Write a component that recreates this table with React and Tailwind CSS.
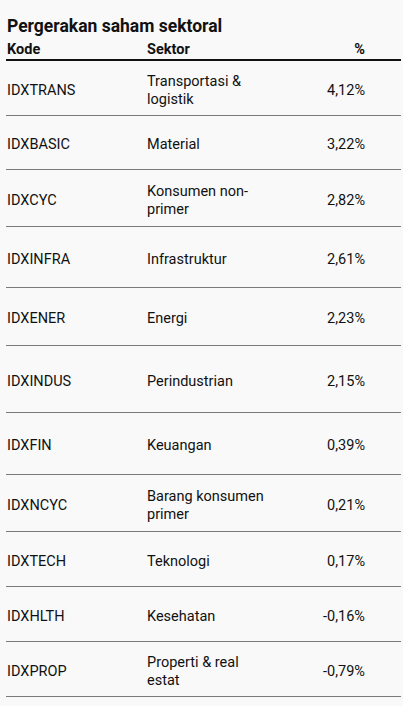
const rows = [
  { code: 'IDXTRANS', sector: 'Transportasi & logistik', pct: '4,12%', h: 'h-[55px]' },
  { code: 'IDXBASIC', sector: 'Material', pct: '3,22%', h: 'h-[54px]' },
  { code: 'IDXCYC', sector: 'Konsumen non-primer', pct: '2,82%', h: 'h-[57px]' },
  { code: 'IDXINFRA', sector: 'Infrastruktur', pct: '2,61%', h: 'h-[61px]' },
  { code: 'IDXENER', sector: 'Energi', pct: '2,23%', h: 'h-[58px]' },
  { code: 'IDXINDUS', sector: 'Perindustrian', pct: '2,15%', h: 'h-[67px]' },
  { code: 'IDXFIN', sector: 'Keuangan', pct: '0,39%', h: 'h-[62px]' },
  { code: 'IDXNCYC', sector: 'Barang konsumen primer', pct: '0,21%', h: 'h-[57px]' },
  { code: 'IDXTECH', sector: 'Teknologi', pct: '0,17%', h: 'h-[55px]' },
  { code: 'IDXHLTH', sector: 'Kesehatan', pct: '-0,16%', h: 'h-[55px]' },
  { code: 'IDXPROP', sector: 'Properti & real estat', pct: '-0,79%', h: 'h-[55px]' },
];

const App = () => {
  return (
    <div className="min-h-[706px] w-[403px] bg-[#f9f9f9] pl-[6px] pr-[2px] pt-[15px] text-[#111] font-['Roboto',sans-serif]">
      {/* Title */}
      <h1 className="pl-[1px] text-[17.5px] font-bold leading-[22px]">Pergerakan saham sektoral</h1>

      {/* Header */}
      <div className="flex h-[24px] items-end border-b-2 border-[#111] pb-[1px] text-[14.5px] font-bold leading-[16px]">
        <div className="w-[141px] pl-[1px]">Kode</div>
        <div className="flex-1">Sektor</div>
        <div className="w-[100px] pr-[36px] text-right">%</div>
      </div>

      {/* Rows */}
      {rows.map((row) => (
        <div
          key={row.code}
          className={`flex items-center border-b border-[#7a7a7a] pt-[5px] text-[14.5px] leading-[18px] ${row.h}`}
        >
          <div className="w-[141px] pl-[1px]">{row.code}</div>
          <div className="flex-1">
            <div className="w-[118px]">{row.sector}</div>
          </div>
          <div className="w-[100px] pr-[36px] text-right">{row.pct}</div>
        </div>
      ))}
    </div>
  );
};

export default App;
